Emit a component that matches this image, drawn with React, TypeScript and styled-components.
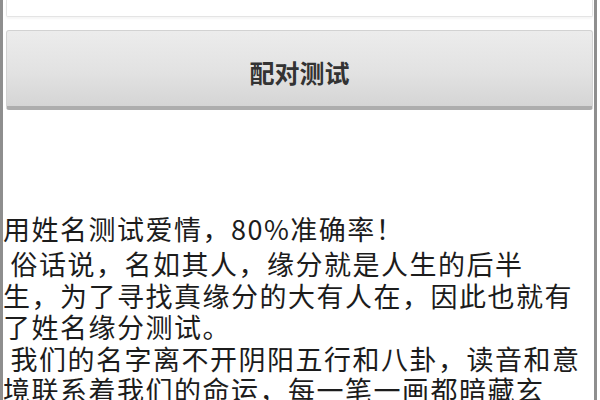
import React, { useState } from 'react';
import styled, { createGlobalStyle } from 'styled-components';

const GlobalStyle = createGlobalStyle`
  html, body {
    margin: 0;
    padding: 0;
    background: #ffffff;
  }
  body {
    font-family: "Noto Sans CJK SC", "Noto Sans", sans-serif;
    overflow: hidden;
  }
`;

const PageStyle = styled.div`
  width: 591px;
  height: 400px;
  border-left: 3px solid #8e8e8e;
  border-right: 3px solid #8e8e8e;
  background: #ffffff;
  overflow: hidden;
`;

const FormStyle = styled.form`
  display: flex;
  flex-direction: column;
  padding: 0 1px 0 3px;
`;

const NameInput = styled.input`
  box-sizing: border-box;
  height: 17px;
  width: 100%;
  margin: 0;
  padding: 0 20px;
  border: 1px solid #e4e4e4;
  border-top: none;
  border-radius: 0 0 2px 2px;
  background: #ffffff;
  box-shadow: 0 2px 2px rgba(0, 0, 0, 0.04);
  font-family: inherit;
  font-size: 14px;
  color: #999;
  outline: none;
`;

const MatchButton = styled.button`
  box-sizing: border-box;
  margin-top: 13px;
  height: 80px;
  width: 100%;
  padding: 6px 0 0;
  border: 1px solid #d2d2d2;
  border-bottom: 4px solid #adadad;
  border-radius: 3px;
  background: linear-gradient(to bottom, #ececec 0%, #e2e2e2 55%, #d5d5d5 100%);
  font-family: "Noto Sans CJK SC", sans-serif;
  font-size: 25px;
  font-weight: 700;
  color: #333333;
  cursor: pointer;
`;

const ResultArea = styled.div`
  height: 103px;
`;

const Article = styled.div`
  color: #1c1c1c;
  font-size: 27px;
  letter-spacing: 1.5px;
  white-space: pre;
`;

const Title = styled.div`
  line-height: 32px;
  margin-bottom: 3px;
`;

const Paragraph = styled.div`
  line-height: 31.6px;
`;

const introLines = [
  ' 俗话说，名如其人，缘分就是人生的后半',
  '生，为了寻找真缘分的大有人在，因此也就有',
  '了姓名缘分测试。',
  ' 我们的名字离不开阴阳五行和八卦，读音和意',
  '境联系着我们的命运，每一笔一画都暗藏玄',
];

const App: React.FC = () => {
  const [name, setName] = useState('');

  return (
    <>
      <GlobalStyle />
      <PageStyle>
        <FormStyle onSubmit={(e) => e.preventDefault()}>
          <NameInput
            value={name}
            onChange={(e) => setName(e.target.value)}
          />
          <MatchButton type='submit'>配对测试</MatchButton>
        </FormStyle>
        <ResultArea />
        <Article>
          <Title>用姓名测试爱情，80%准确率！</Title>
          <Paragraph>
            {introLines.map((line, i) => (
              <div key={i}>{line}</div>
            ))}
          </Paragraph>
        </Article>
      </PageStyle>
    </>
  );
};

export default App;
